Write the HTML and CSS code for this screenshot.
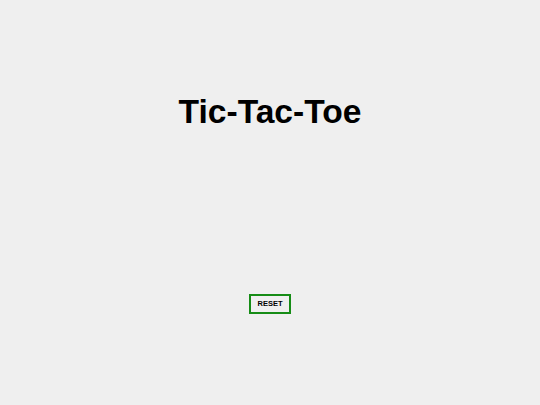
FILE: index.html
```html
<!DOCTYPE html>
<html>
<head>
<meta charset="utf-8">
<link rel="stylesheet" href="styles.css">
<title>Tic-Tac-Toe</title>
</head>
<body>
<main class="game">
  <h1 class="title">Tic-Tac-Toe</h1>
  <div class="board"></div>
  <button class="reset">RESET</button>
</main>
</body>
</html>
```
FILE: styles.css
```css
html, body {
  margin: 0;
  padding: 0;
  background: #efefef;
  font-family: "Liberation Sans", Arial, sans-serif;
}
.game {
  display: flex;
  flex-direction: column;
  align-items: center;
  padding-top: 92px;
}
.title {
  margin: 0;
  font-size: 33.6px;
  line-height: 39px;
  font-weight: bold;
  color: #000;
}
.board {
  height: 163px;
}
.reset {
  box-sizing: border-box;
  width: 42px;
  height: 20px;
  padding: 0;
  border: 2px solid #168c16;
  background: #efefef;
  font-family: "Liberation Sans", Arial, sans-serif;
  font-size: 7.5px;
  line-height: 16px;
  font-weight: bold;
  color: #000;
  cursor: pointer;
}
```
